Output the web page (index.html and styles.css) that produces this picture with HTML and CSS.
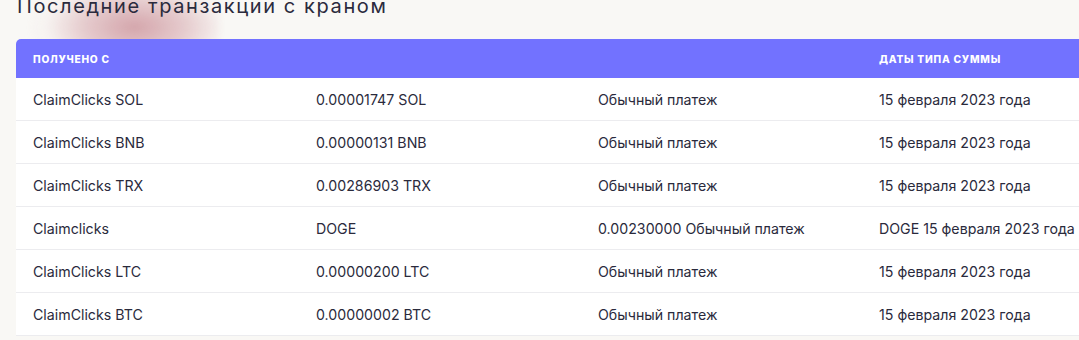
FILE: index.html
```html
<!DOCTYPE html>
<html lang="ru">
<head>
<meta charset="utf-8">
<link rel="stylesheet" href="styles.css">
</head>
<body>
<div class="page">
  <div class="blob"></div>
  <h2 class="title">Последние транзакции с краном</h2>
  <div class="table">
    <div class="row head">
      <div class="cell">Получено с</div>
      <div class="cell"></div>
      <div class="cell"></div>
      <div class="cell">Даты типа суммы</div>
    </div>
    <div class="row">
      <div class="cell">ClaimClicks SOL</div>
      <div class="cell">0.00001747 SOL</div>
      <div class="cell">Обычный платеж</div>
      <div class="cell">15 февраля 2023 года</div>
    </div>
    <div class="row">
      <div class="cell">ClaimClicks BNB</div>
      <div class="cell">0.00000131 BNB</div>
      <div class="cell">Обычный платеж</div>
      <div class="cell">15 февраля 2023 года</div>
    </div>
    <div class="row">
      <div class="cell">ClaimClicks TRX</div>
      <div class="cell">0.00286903 TRX</div>
      <div class="cell">Обычный платеж</div>
      <div class="cell">15 февраля 2023 года</div>
    </div>
    <div class="row">
      <div class="cell">Claimclicks</div>
      <div class="cell">DOGE</div>
      <div class="cell">0.00230000 Обычный платеж</div>
      <div class="cell">DOGE 15 февраля 2023 года</div>
    </div>
    <div class="row">
      <div class="cell">ClaimClicks LTC</div>
      <div class="cell">0.00000200 LTC</div>
      <div class="cell">Обычный платеж</div>
      <div class="cell">15 февраля 2023 года</div>
    </div>
    <div class="row">
      <div class="cell">ClaimClicks BTC</div>
      <div class="cell">0.00000002 BTC</div>
      <div class="cell">Обычный платеж</div>
      <div class="cell">15 февраля 2023 года</div>
    </div>
  </div>
</div>
</body>
</html>
```

FILE: styles.css
```css
html, body {
  margin: 0;
  padding: 0;
  background: #f9f8f5;
  overflow: hidden;
}

.page {
  position: relative;
  width: 1079px;
  height: 340px;
  overflow: hidden;
  font-family: Inter, "Noto Sans", sans-serif;
  color: #2a2a3c;
}

.blob {
  position: absolute;
  left: 30px;
  top: -25px;
  width: 190px;
  height: 95px;
  background: radial-gradient(ellipse at 55% 55%, rgba(205, 150, 158, 0.85) 0%, rgba(214, 168, 174, 0.55) 35%, rgba(240, 225, 225, 0.2) 60%, rgba(249, 248, 245, 0) 75%);
  filter: blur(3px);
}

.title {
  position: relative;
  margin: -6px 0 0 17px;
  font-size: 20px;
  line-height: 24px;
  font-weight: 400;
  letter-spacing: 1.6px;
  color: #2b2b3d;
  height: 45px;
}

.table {
  position: relative;
  margin-left: 16px;
  width: 1144px;
  background: #ffffff;
  border-radius: 5px 5px 0 0;
  overflow: hidden;
}

.row {
  display: grid;
  grid-template-columns: 283px 282px 281px 298px;
  height: 42px;
  align-items: center;
  border-bottom: 1px solid #ececef;
  font-size: 14.2px;
}

.row.head {
  height: 39px;
  background: #7272ff;
  color: #ffffff;
  font-size: 10.2px;
  font-weight: 800;
  letter-spacing: 0.75px;
  text-transform: uppercase;
  border-bottom: none;
}

.cell {
  padding-left: 17px;
  white-space: nowrap;
}
```
